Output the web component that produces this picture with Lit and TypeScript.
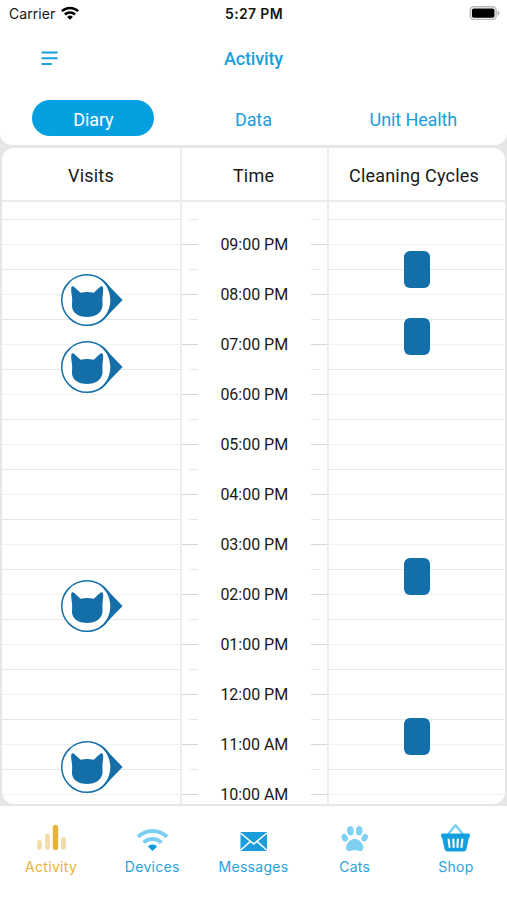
import { LitElement, html, css, svg, nothing } from "lit";
import { customElement, property } from "lit/decorators.js";

const HOUR = 50.08;
const FIRST_HOUR = 21;
const HOURS = Array.from({ length: 12 }, (_, i) => FIRST_HOUR - i);
const VISITS = [19.88, 18.54, 13.77, 10.56];
const CYCLES = [20.49, 19.16, 14.37, 11.16];

const label = (h: number) =>
  `${String(((h + 11) % 12) + 1).padStart(2, "0")}:00 ${h >= 12 ? "PM" : "AM"}`;
const offset = (time: number) => `top:${(42 + (FIRST_HOUR - time) * HOUR).toFixed(1)}px`;

@customElement("status-bar")
class StatusBar extends LitElement {
  static styles = css`
    :host { display: grid; grid-template-columns: 1fr auto 1fr; align-items: center; height: 28px;
      padding: 0 7px 0 9px; font: 14px/28px Inter, sans-serif; color: #161616; }
    .carrier { display: flex; align-items: center; gap: 6px; letter-spacing: 0.05px; }
    .carrier svg { margin-top: -2px; }
    .clock { font-weight: 600; letter-spacing: 0.35px; padding-right: 1px; }
    .battery { justify-self: end; margin-top: -2px; }
    svg { display: block; }
  `;
  render() {
    return html`
      <div class="carrier"><span>Carrier</span>
        <svg width="18" height="14" viewBox="0 0 18 14" fill="none" stroke="#000" stroke-width="2.5">
          <path d="M.9 5.2a11.6 11.6 0 0 1 16.2 0M3.9 8.5a7.3 7.3 0 0 1 10.2 0" />
          <path d="M9 13.8 6.1 10.9a4.1 4.1 0 0 1 5.8 0Z" fill="#000" stroke="none" />
        </svg>
      </div>
      <div class="clock">5:27 PM</div>
      <svg class="battery" width="31" height="14" viewBox="0 0 31 14">
        <rect x="1.2" y=".7" width="26" height="12.8" rx="3.8" fill="#fff" stroke="#b9b9b9" stroke-width="1.4" />
        <rect x="2.9" y="2.4" width="22.6" height="9.4" rx="1.8" />
        <path d="M28.7 4.8q1.7.7 1.7 2.3t-1.7 2.3z" fill="#a8a8a8" />
      </svg>`;
  }
}

@customElement("cat-marker")
class CatMarker extends LitElement {
  static styles = css`
    :host { display: block; width: 62px; height: 54px; }
    svg { display: block; }
  `;
  render() {
    return html`<svg width="62" height="54" viewBox="0 0 62 54">
      <path d="M41 5.8 61.6 27 41 48.2Z" fill="#146fa9" />
      <circle cx="26" cy="27" r="25.3" fill="#146fa9" stroke="#146fa9" stroke-width="1.4" />
      <path d="M26 2.5C40 2.5 49.300 14 49.300 27S40 51.500 26 51.500A24.500 24.500 0 0 1 26 2.500Z" fill="#fff" />
      <path fill="#146fa9" d="M10.300 14.600c.3-1.600 1.700-1.800 2.700-.9l6.500 6q6.500-1.200 13.200 0l6.500-6c1-.9 2.500-.7 2.800.8.7 3.300-.6 8.400-.6 12.500 0 3.200.6 5.900-.5 8.600-2.400 6.200-7.700 8.300-14.800 8.300S13.700 41.800 11.500 36c-1-2.800-.3-5.500-.3-8.700 0-4-1.600-9.500-.9-12.700Z" />
    </svg>`;
  }
}

@customElement("diary-card")
class DiaryCard extends LitElement {
  static styles = css`
    :host { display: grid; grid-template-columns: 178px 147px 1fr; grid-template-rows: 54.5px 1fr;
      background: #fff; border-radius: 12px; overflow: hidden; font-family: Roboto, sans-serif; }
    .head { display: flex; align-items: center; justify-content: center; font-size: 18px; min-width: 0;
      letter-spacing: 0.2px; color: #191919; border-bottom: 2px solid #ebebeb; padding-top: 3px; box-sizing: border-box; }
    .head.time-head { padding-right: 2px; }
    .head + .head, .col + .col { border-left: 2px solid #ededed; }
    .head.last { padding-right: 6px; }
    .col { position: relative; overflow: hidden; box-sizing: border-box; }
    .lines { padding-top: 16.5px; }
    .cell { height: 25.04px; box-sizing: border-box; border-top: 1.5px solid #e7e7e7; }
    .cell.full { border-color: #f1f1f1; }
    .last .lines { padding-right: 1.5px; }
    .row { height: 50.08px; display: grid; grid-template-columns: 15.5px 1fr 16px; align-items: start; }
    .times { padding-top: 16.5px; }
    .tick { display: flex; flex-direction: column; }
    .tick i { height: 25.04px; box-sizing: border-box; border-top: 1.5px solid #d6d6d6; }
    .tick i:first-child { width: 9px; align-self: flex-end; border-color: #e8e8e8; }
    .tick.right i:first-child { align-self: flex-start; }
    .time { line-height: 51.5px; text-align: center; font-size: 16px; color: #191919; letter-spacing: -0.02px; }
    .visit { position: absolute; left: 59px; margin-top: -27px; }
    .cycle { position: absolute; left: 75px; width: 26px; height: 37px; margin-top: -18.5px;
      border-radius: 6px; background: #146fa9; }
  `;
  private lines() {
    return html`<div class="lines">
      ${HOURS.map(() => html`<div class="cell"></div><div class="cell full"></div>`)}
    </div>`;
  }
  render() {
    return html`
      <div class="head">Visits</div>
      <div class="head time-head">Time</div>
      <div class="head last">Cleaning Cycles</div>
      <div class="col">
        ${this.lines()}
        ${VISITS.map((t) => html`<cat-marker class="visit" style=${offset(t)}></cat-marker>`)}
      </div>
      <div class="col">
        <div class="times">
          ${HOURS.map((h) => html`<div class="row">
            <div class="tick"><i></i><i></i></div>
            <div class="time">${label(h)}</div>
            <div class="tick right"><i></i><i></i></div>
          </div>`)}
        </div>
      </div>
      <div class="col last">
        ${this.lines()}
        ${CYCLES.map((t) => html`<div class="cycle" style=${offset(t)}></div>`)}
      </div>`;
  }
}

const ICONS: Record<string, unknown> = {
  Activity: svg`<g stroke-linecap="round" stroke-width="4.8" stroke="#f3dcab">
      <path d="M4.5 25.5V20.5M12.5 25.5V14M28.5 25.5V17.5" /><path d="M20.5 25.500V5.500" stroke="#e6b23c" stroke-width="5.4" /></g>`,
  Devices: svg`<g fill="none" stroke="#7bcff2" stroke-width="4"><path d="M2 14.9a20.5 20.5 0 0 1 29 0" />
      <path d="M7.6 20.6a12.6 12.6 0 0 1 17.8 0" stroke="#7bcff2" /></g>
      <path d="M16.5 28.9 12.4 25q-.5-1.2 1-1.8 3.1-1.2 6.2 0 1.5.6 1 1.8Z" fill="#0a9bdc" />`,
  Messages: svg`<rect x="3.500" y="10" width="26.500" height="19" fill="#1b9cdb" />
      <path d="M3.5 11 16.7 22 29.900 11M3.500 28.200l9.700-8.600M29.900 28.200 20.200 19.600" fill="none" stroke="#fff" stroke-width="1.5" />`,
  Cats: svg`<g fill="#7fd0f2"><ellipse cx="12.4" cy="8.8" rx="3.3" ry="4.7" transform="rotate(-8 12.4 8.8)" />
      <ellipse cx="21.2" cy="8.8" rx="3.3" ry="4.7" transform="rotate(8 21.2 8.8)" />
      <ellipse cx="6.7" cy="15.7" rx="3" ry="3.9" transform="rotate(-25 6.7 15.7)" />
      <ellipse cx="26.7" cy="15.7" rx="3" ry="3.9" transform="rotate(25 26.7 15.7)" />
      <path d="M16.7 17c4 0 5.900 2.600 7.400 4.800 2.500 3.700 1.200 7.300-2 7.300-2.200 0-3.400-1-5.400-1s-3.200 1-5.400 1c-3.200 0-4.500-3.600-2-7.300 1.500-2.200 3.400-4.800 7.400-4.800Z" /></g>`,
  Shop: svg`<path d="M9.2 12 16.5 3.3 23.8 12" fill="none" stroke="#7bcff2" stroke-width="2.5" stroke-linejoin="round" />
      <path d="M3.2 11.500H29.8q1 0 1 1v2.200q0 1-1 1.200L27.400 27.300q-.5 2.300-2.800 2.300H8.400q-2.300 0-2.800-2.300L3.200 15.900q-1-.2-1-1.200V12.500q0-1 1-1Z" fill="#109fdf" />
      <path d="M9.600 17.500l1 7.500M14.300 17.500l.4 7.500M18.800 17.500l-.3 7.500M23.400 17.500l-1 7.500" stroke="#fff" stroke-width="2.1" stroke-linecap="round" />`,
};

@customElement("nav-item")
class NavItem extends LitElement {
  @property() name = "";
  static styles = css`
    :host { display: flex; flex-direction: column; align-items: center; padding-top: 16px; color: #28a3dc; }
    :host([active]) { color: #e6b23c; }
    svg { display: block; }
    span { font: 14px/18px Inter, sans-serif; letter-spacing: 0.3px; margin-top: 6px; }
  `;
  render() {
    return html`<svg width="33" height="30" viewBox="0 0 33 30">${ICONS[this.name] ?? nothing}</svg>
      <span>${this.name}</span>`;
  }
}

@customElement("app-root")
class AppRoot extends LitElement {
  static styles = css`
    :host { display: flex; flex-direction: column; height: 900px; width: 507px; background: #e5e6e6;
      font-family: Roboto, sans-serif; overflow: hidden; color: #1b9edb; }
    header { background: #fff; height: 145px; border-radius: 0 0 12px 12px; box-sizing: border-box; }
    .title { display: grid; grid-template-columns: 1fr auto 1fr; align-items: center; height: 60px;
      padding: 0 41px; font-size: 18px; font-weight: 500; letter-spacing: -0.15px; }
    .title span { padding-top: 1px; }
    .title svg { display: block; }
    .tabs { display: grid; grid-template-columns: 122px 198px 122px; padding-left: 32.4px; margin-top: 12px; }
    .tab { height: 36px; line-height: 39px; text-align: center; font-size: 18px; letter-spacing: -0.1px; }
    .tab.on { background: #069fe0; color: #fff; border-radius: 18px; }
    diary-card { margin: 2.5px 2px 2px; height: 656.5px; }
    nav { background: #fff; flex: 1; display: grid; grid-template-columns: repeat(5, 101.2px); justify-content: center; }
  `;
  render() {
    return html`
      <header>
        <status-bar></status-bar>
        <div class="title">
          <svg width="17" height="15" viewBox="0 0 17 15" stroke="#1b9edb" stroke-width="2" stroke-linecap="round">
            <path d="M1.3 1.5H15.8M1.3 7.3H15.8M1.3 13.1H10" />
          </svg>
          <span>Activity</span>
        </div>
        <div class="tabs">
          <div class="tab on">Diary</div>
          <div class="tab">Data</div>
          <div class="tab">Unit Health</div>
        </div>
      </header>
      <diary-card></diary-card>
      <nav>
        <nav-item name="Activity" active></nav-item>
        <nav-item name="Devices"></nav-item>
        <nav-item name="Messages"></nav-item>
        <nav-item name="Cats"></nav-item>
        <nav-item name="Shop"></nav-item>
      </nav>`;
  }
}
